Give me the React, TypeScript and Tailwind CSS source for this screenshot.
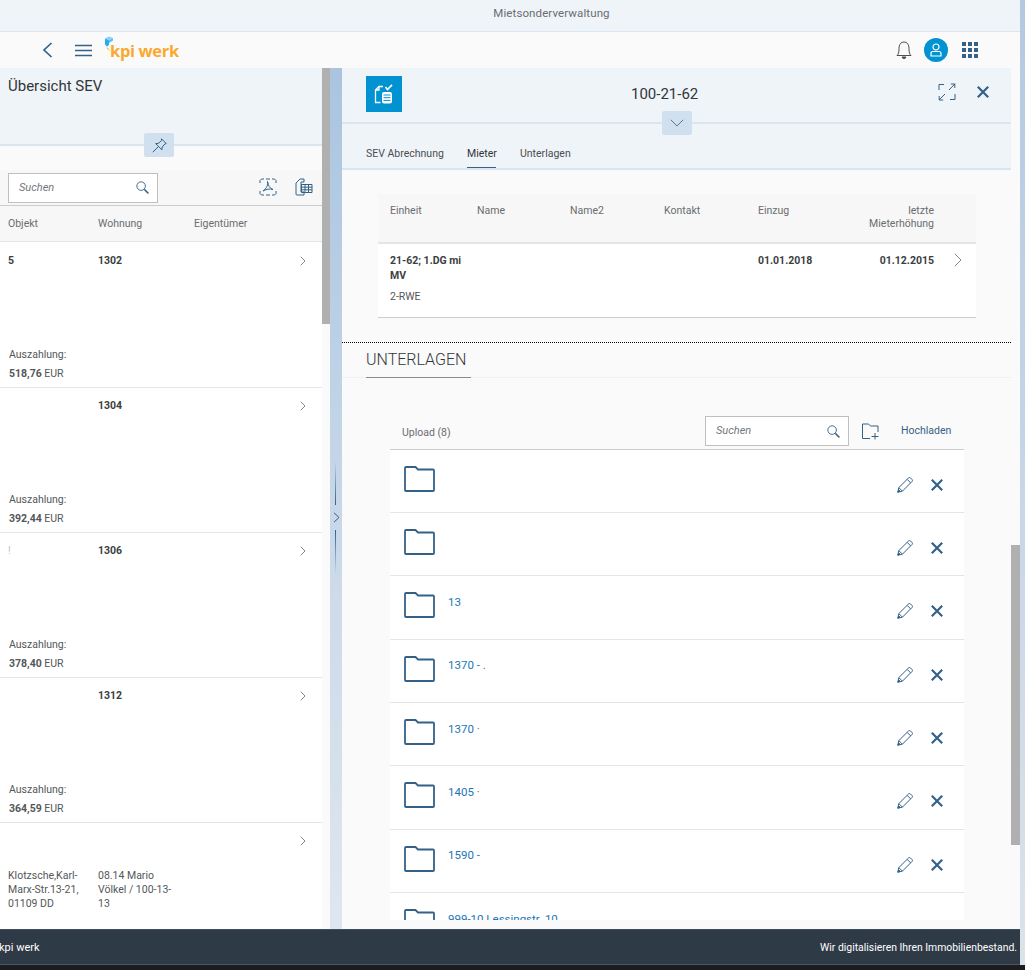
import { ChevronRight } from "lucide-react";

const BLUE = "#346187";

function SearchGlass() {
  return (
    <svg width="13" height="13" viewBox="0 0 14 14" fill="none" stroke={BLUE} strokeWidth="1">
      <circle cx="5.5" cy="5.5" r="4.6" />
      <path d="M9 9l4.400 4.400" strokeWidth="1.600" />
    </svg>
  );
}

function SearchBox({ width }: { width: string }) {
  return (
    <div className={`${width} h-[30px] bg-white border border-[#bfbfbf] flex items-center justify-between pl-[10px] pr-[8px]`}>
      <span className="text-[11px] italic text-[#74777a] pt-[1px]">Suchen</span>
      <SearchGlass />
    </div>
  );
}

function Folder() {
  return (
    <svg width="31" height="26" viewBox="0 0 31 26" fill="none" stroke={BLUE} strokeWidth="1.800" className="shrink-0">
      <path d="M1 24V2a1 1 0 0 1 1-1h9.500l2.500 2.500h15a1 1 0 0 1 1 1V24a1 1 0 0 1-1 1H2a1 1 0 0 1-1-1z" />
    </svg>
  );
}

function Pencil() {
  return (
    <svg width="16" height="16" viewBox="0 0 16 16" fill="none" stroke={BLUE} strokeWidth="1">
      <path d="M.8 15.200l1-4.600L11.600.9q1-.7 1.800 0l1.700 1.700q.7.9 0 1.800l-9.700 9.800z" />
      <path d="M1.800 10.600l3.600 3.600M10.200 2.400l3.500 3.500" />
      <path d="M.8 15.200l1-2.200 1.200 1.200z" fill={BLUE} />
    </svg>
  );
}

function CloseX({ size = 12 }: { size?: number }) {
  return (
    <svg width={size} height={size} viewBox="0 0 12 12" fill="none" stroke={BLUE} strokeWidth="2.200">
      <path d="M.8.8l10.400 10.400M11.200.8L.8 11.200" />
    </svg>
  );
}

function Logo() {
  return (
    <div className="flex items-start h-[30px]">
      <svg width="9" height="17" viewBox="0 0 9 17" className="mt-[1px] shrink-0">
        <path d="M1 2.500L5 .5l4 1.500-4 2.300z" fill="#86d3f5" />
        <path d="M1 2.500l4 1.800V9l-2 1.500-2-2z" fill="#25aeea" />
        <path d="M5 4.300L9 2v2.500L5 7z" fill="#5cc3f1" />
        <path d="M3 11l3 3.500H5L2.500 12z" fill="#f9b233" />
      </svg>
      <span className="ml-[-3px] mt-[5px] text-[16.500px] leading-[22px] font-bold text-[#fba92e] font-['Open_Sans',sans-serif] tracking-[-0.350px]">
        kpi werk
      </span>
    </div>
  );
}

function ListRow({
  col1,
  col2,
  amount,
  tall,
  faint,
}: {
  col1?: string;
  col2?: string;
  amount?: string;
  tall?: boolean;
  faint?: boolean;
}) {
  return (
    <div className={`${tall ? "h-[146px] pt-[11px]" : "h-[145px] pt-[10px]"} shrink-0 bg-white border-b border-[#e5e5e5] flex flex-col pl-[8px]`}>
      <div className="flex items-start h-[16px]">
        <span className={`w-[90px] text-[10.500px] ${faint ? "font-normal text-[#c4c4c4]" : "font-bold text-[#3b3f43]"}`}>{col1}</span>
        <span className="text-[10.500px] font-bold text-[#3b3f43]">{col2}</span>
        <ChevronRight size={16} strokeWidth={1.500} color="#85888b" className="ml-auto mr-[11px]" />
      </div>
      {amount && (
        <div className="mt-auto pb-[6px] text-[10.500px] text-[#53575a] flex flex-col gap-[5px] pl-[1px]">
          <span className="leading-[14px]">Auszahlung:</span>
          <span className="leading-[14px]">
            <b>{amount}</b> EUR
          </span>
        </div>
      )}
    </div>
  );
}

function FileRow({ label }: { label?: string }) {
  return (
    <div className="h-[63.330px] shrink-0 bg-white border-b border-[#e5e5e5] flex items-center pl-[14px] pr-[21px]">
      <div className="mb-[4px] flex items-center">
        <Folder />
        {label && <span className="ml-[13px] mb-[6px] text-[11.500px] text-[#1c75b5] whitespace-nowrap">{label}</span>}
      </div>
      <div className="ml-auto flex items-center gap-[18px] mt-[8px]">
        <Pencil />
        <CloseX size={12} />
      </div>
    </div>
  );
}

export default function App() {
  return (
    <div className="w-[1025px] h-[970px] overflow-hidden flex flex-col font-['Roboto',sans-serif] text-[#32363a] bg-[#1c1c1f]">
      <div className="flex h-[965px] shrink-0">
        <div className="w-[1020px] flex flex-col shrink-0">
          {/* Title bar */}
          <div className="h-[32px] shrink-0 bg-[#eff4f9] border-b border-[#d9e5f0] flex items-center justify-center pb-[4px] pl-[83px]">
            <span className="text-[11.500px] text-[#6a6d70] tracking-[0.1px]">Mietsonderverwaltung</span>
          </div>

          {/* Shell header */}
          <div className="h-[36px] shrink-0 bg-[#fafafa] flex items-center pl-[42px] pr-[42px]">
            <svg width="11" height="16" viewBox="0 0 11 16" fill="none" stroke={BLUE} strokeWidth="1.700">
              <path d="M9.500 1L2 8l7.500 7" />
            </svg>
            <svg width="17" height="13" viewBox="0 0 17 13" fill="none" stroke={BLUE} strokeWidth="1.700" className="ml-[22px] mr-[12px]">
              <path d="M0 1.500h17M0 6.500h17M0 11.500h17" />
            </svg>
            <Logo />
            <div className="ml-auto flex items-center">
              <svg width="16" height="20" viewBox="0 0 16 20" fill="none" stroke="#4b4e52" strokeWidth="1">
                <path d="M1 15.500c1.500-1.500 2-3 2-7 0-4 2-6.500 5-6.500s5 2.500 5 6.500c0 4 .5 5.500 2 7z" />
                <path d="M6 17h4l-1 1.500H7z" fill="#4b4e52" />
              </svg>
              <div className="w-[24px] h-[24px] rounded-full bg-[#0092d1] flex items-center justify-center ml-[12px]">
                <svg width="12" height="14" viewBox="0 0 12 14" fill="none" stroke="#fff" strokeWidth="1.200">
                  <circle cx="6" cy="4" r="3" />
                  <path d="M1 13v-2.500q0-2 2-2h6q2 0 2 2V13z" />
                </svg>
              </div>
              <div className="grid grid-cols-3 gap-[2px] ml-[14px]">
                {Array.from({ length: 9 }).map((_, i) => (
                  <span key={i} className="w-[4px] h-[4px] bg-[#346187]" />
                ))}
              </div>
            </div>
          </div>

          <div className="flex flex-1 min-h-0">
            {/* Left list */}
            <div className="w-[322px] shrink-0 flex flex-col overflow-hidden relative">
              <div className="h-[78px] shrink-0 bg-[#eff4f9] border-b-2 border-[#d9e5f0] pl-[8px] pt-[8px]">
                <span className="block text-[15px] leading-[20px]">Übersicht SEV</span>
              </div>
              <div className="absolute left-[144px] top-[65px] w-[30px] h-[24px] rounded-[2px] bg-[#d1e0ee] flex items-center justify-center">
                <svg width="15" height="15" viewBox="0 0 15 15" fill="none" stroke={BLUE} strokeWidth="1">
                  <path d="M9.500.8l4.700 4.700-1.300.5-2.700 3-.3 2.800-6.200-6.200 2.800-.3 3-2.700z" />
                  <path d="M6.500 8.500L.8 14.200" />
                </svg>
              </div>
              <div className="h-[24px] shrink-0 bg-[#fafafa]" />
              <div className="h-[36px] shrink-0 bg-[#f7f7f7] border-b border-[#cccccc] flex items-center pl-[8px] pr-[9px]">
                <SearchBox width="w-[150px]" />
                <svg width="18" height="18" viewBox="0 0 18 18" fill="none" stroke={BLUE} strokeWidth="1" className="ml-auto mb-[2px]">
                  <path d="M1 5V2.500L2.500 1H5M13 1h2.500L17 2.500V5M1 13v2.500L2.500 17H5M13 17h2.500l1.500-1.500V13M7 1h4M7 17h4" />
                  <path d="M8.500 3.500c1 3-1 7-4.500 9.500 3.500-2 7-2.500 10-1.500-3-1-5-4-5.500-8z" />
                </svg>
                <svg width="18" height="18" viewBox="0 0 18 18" fill="none" stroke={BLUE} strokeWidth="1" className="ml-[18px] mb-[2px]">
                  <path d="M5 1h4v3H6v10h3v3H2a1 1 0 0 1-1-1V5z" />
                  <path d="M6.500 6.500H17v8H6.500zM10 6.500v8M13.500 6.500v8M6.500 9.200H17M6.500 11.800H17" />
                </svg>
              </div>
              <div className="h-[36px] shrink-0 bg-[#f7f7f7] border-b border-[#e5e5e5] flex items-center pl-[8px] pt-[1px] text-[10.500px] text-[#6a6d70]">
                <span className="w-[90px]">Objekt</span>
                <span className="w-[96px]">Wohnung</span>
                <span>Eigentümer</span>
              </div>
              <ListRow tall col1="5" col2="1302" amount="518,76" />
              <ListRow col2="1304" amount="392,44" />
              <ListRow faint col1="!" col2="1306" amount="378,40" />
              <ListRow col2="1312" amount="364,59" />
              <div className="flex-1 bg-white pl-[8px] pt-[10px] flex flex-col">
                <ChevronRight size={16} strokeWidth={1.500} color="#85888b" className="ml-auto mr-[11px]" />
                <div className="flex mt-[20px] text-[10.500px] leading-[14px] text-[#53575a]">
                  <span className="w-[90px] pr-[6px]">Klotzsche,Karl-Marx-Str.13-21, 01109 DD</span>
                  <span className="w-[80px]">08.14 Mario Völkel / 100-13-13</span>
                </div>
              </div>
            </div>

            {/* Left scrollbar */}
            <div className="w-[8px] shrink-0 bg-[#fafafa]">
              <div className="h-[256px] bg-[#b0b0b0]" />
            </div>

            {/* Divider */}
            <div className="w-[12px] shrink-0 bg-gradient-to-b from-[#aac4e0] via-[#c7d7e8] to-[#dfe6ef] flex flex-col items-center justify-center pt-[37px]">
              <div className="w-[1px] h-[44px] mr-[1px] bg-gradient-to-b from-transparent to-[#346187]" />
              <svg width="7" height="11" viewBox="0 0 7 11" fill="none" stroke={BLUE} strokeWidth="1" className="my-[7px]">
                <path d="M1 .8l5 4.700-5 4.700" />
              </svg>
              <div className="w-[1px] h-[44px] mr-[1px] bg-gradient-to-t from-transparent to-[#346187]" />
            </div>

            {/* Right panel */}
            <div className="w-[669px] shrink-0 flex flex-col relative overflow-hidden bg-[#fafafa]">
              <div className="h-[56px] shrink-0 bg-[#eff4f9] border-b-2 border-[#d9e5f0] flex items-start pl-[24px] pr-[22px] pt-[8px]">
                <div className="w-[36px] h-[36px] bg-[#0092d1] flex items-center justify-center">
                  <svg width="20" height="20" viewBox="0 0 20 20" fill="none" stroke="#fff" strokeWidth="1.300">
                    <path d="M9 2.500H5L1.500 6v12.500h5" />
                    <path d="M5 2.500V6H1.500" />
                    <path d="M11.500 3l2 2.500L18 .8" strokeWidth="1.700" />
                    <rect x="8" y="8" width="10" height="11.500" rx="2" fill="#fff" stroke="none" />
                    <path d="M9.500 11h7M9.500 13.700h7M9.500 16.400h7" stroke="#0092d1" strokeWidth="1" />
                  </svg>
                </div>
                <span className="ml-[229px] mt-[8px] text-[15px] leading-[20px]">100-21-62</span>
                <svg width="18" height="18" viewBox="0 0 18 18" fill="none" stroke={BLUE} strokeWidth="1" className="ml-auto mt-[7px]">
                  <path d="M1 7V1.500h5M12 16.500h5V11M17 .8L11 7M16.800 5V1h-4M1 17l6-6M1.200 13v4h4" />
                </svg>
                <div className="ml-[21px] mt-[10px]">
                  <CloseX size={12} />
                </div>
              </div>
              <div className="absolute left-[320px] top-[43px] w-[30px] h-[24px] rounded-[2px] bg-[#d1e0ee] flex items-center justify-center">
                <svg width="14" height="8" viewBox="0 0 14 8" fill="none" stroke="#55779b" strokeWidth="1">
                  <path d="M.8.8L7 7l6.200-6.200" />
                </svg>
              </div>

              {/* Tabs */}
              <div className="h-[46px] shrink-0 bg-[#eff4f9] border-b-2 border-[#d9e5f0] flex items-end pl-[24px] gap-[24px] text-[10.500px] text-[#4b4e52]">
                <span className="w-[77px] h-[26px] pt-[4px] whitespace-nowrap">SEV Abrechnung</span>
                <span className="w-[29px] h-[26px] pt-[4px] border-b border-[#346187] text-[#32363a]">Mieter</span>
                <span className="h-[26px] pt-[4px]">Unterlagen</span>
              </div>

              {/* Tenants table */}
              <div className="mt-[24px] ml-[36px] w-[598px] shrink-0">
                <div className="h-[50px] bg-[#f7f7f7] border-b-2 border-[#e5e5e5] grid grid-cols-[87px_93px_94px_94px_88px_88px] pl-[12px] pt-[10px] text-[10.500px] leading-[13px] text-[#6a6d70]">
                  <span>Einheit</span>
                  <span>Name</span>
                  <span>Name2</span>
                  <span>Kontakt</span>
                  <span>Einzug</span>
                  <span className="text-right">
                    letzte
                    <br />
                    Mieterhöhung
                  </span>
                </div>
                <div className="h-[74px] bg-white border-b border-[#cccccc] flex pl-[12px] pt-[9px] text-[10.500px] leading-[15px] text-[#3b3f43]">
                  <div className="w-[87px] pr-[10px]">
                    <div className="font-bold">21-62; 1.DG mi MV</div>
                    <div className="mt-[6px] text-[#53575a]">2-RWE</div>
                  </div>
                  <span className="ml-[281px] w-[88px] font-bold">01.01.2018</span>
                  <span className="w-[88px] text-right font-bold">01.12.2015</span>
                  <ChevronRight size={24} strokeWidth={1} color="#85888b" className="ml-[12px] mt-[-5px]" />
                </div>
              </div>

              <div className="mt-[24px] shrink-0 border-t border-dotted border-black" />

              {/* Documents */}
              <div className="h-[35px] shrink-0 border-b border-[#f0f0f0] pl-[24px]">
                <div className="w-[105px] h-[35px] border-b border-[#8a8d90] flex items-center">
                  <span className="text-[16px] font-light text-[#32363a]">UNTERLAGEN</span>
                </div>
              </div>

              <div className="mt-[38px] mx-[48px] w-[574px] shrink-0 h-[34px] border-b border-[#cccccc] flex items-start pl-[12px]">
                <span className="text-[10.500px] text-[#6a6d70] mt-[9px]">Upload (8)</span>
                <div className="ml-auto flex items-center">
                  <SearchBox width="w-[144px]" />
                  <svg width="18" height="17" viewBox="0 0 18 17" fill="none" stroke={BLUE} strokeWidth="1" className="ml-[12px]">
                    <path d="M9 15.500H1.500V1h6l2 2h7.500v6M14 10v6.500M10.500 13.500h7" />
                  </svg>
                  <span className="w-[50px] whitespace-nowrap text-[10.500px] text-[#346187] ml-[22px] mr-[13px]">Hochladen</span>
                </div>
              </div>

              <div className="mt-[-0.330px] mx-[48px] w-[574px] flex flex-col overflow-hidden h-[470.330px] shrink-0">
                <FileRow />
                <FileRow />
                <FileRow label="13" />
                <FileRow label="1370 - ." />
                <FileRow label="1370 ·" />
                <FileRow label="1405 ·" />
                <FileRow label="1590 -" />
                <FileRow label="999-10 Lessingstr. 10" />
              </div>
            </div>

            {/* Right scrollbar */}
            <div className="w-[9px] shrink-0 bg-[#fafafa] flex flex-col">
              <div className="h-[477px] shrink-0" />
              <div className="h-[300px] shrink-0 bg-[#b0b0b0]" />
            </div>
          </div>

          {/* Footer */}
          <div className="h-[36px] shrink-0 bg-[#2f3a47] border-t border-[#3f4d5e] border-b border-b-[#46586c] flex items-center justify-between text-white text-[10.400px] pr-[3px] pt-[2px]">
            <span className="ml-[-1px] text-[11px]">kpi werk</span>
            <span>Wir digitalisieren Ihren Immobilienbestand.</span>
          </div>
        </div>
        <div className="w-[5px] shrink-0 bg-gradient-to-b from-[#b4c9e1] to-[#dbe2ea]" />
      </div>
      <div className="h-[5px] shrink-0 bg-[#1c1c1f]" />
    </div>
  );
}
